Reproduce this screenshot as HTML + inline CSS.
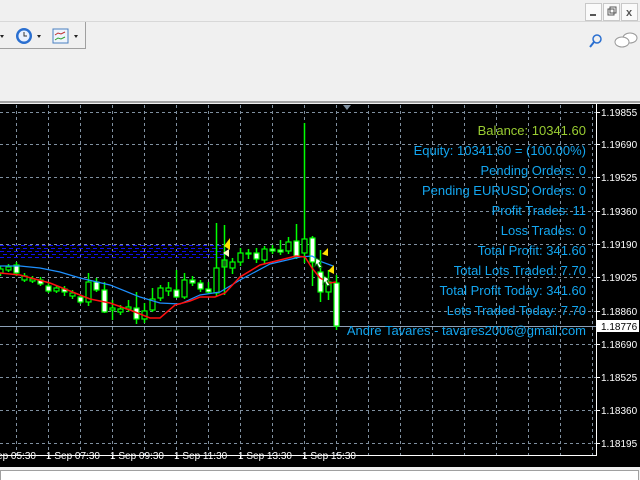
<!DOCTYPE html>
<html><head><meta charset="utf-8"><style>
html,body{margin:0;padding:0;width:640px;height:480px;overflow:hidden;background:#f0f0f0;font-family:"Liberation Sans",sans-serif}
svg{position:absolute;left:0;top:0}
</style></head><body>
<svg width="640" height="480" xmlns="http://www.w3.org/2000/svg" font-family="Liberation Sans, sans-serif">
<rect width="640" height="480" fill="#f0f0f0"/>
<line x1="0" y1="21.5" x2="640" y2="21.5" stroke="#d8d8d8"/>
<g stroke="#c8c8c8" fill="#fafafa">
<rect x="585.5" y="3.5" width="16" height="17"/><rect x="603.5" y="3.5" width="16" height="17"/><rect x="621.5" y="3.5" width="16" height="17"/></g>
<rect x="590" y="14" width="6" height="2" fill="#555"/>
<rect x="608" y="9" width="6" height="6" fill="none" stroke="#555"/><rect x="610" y="7" width="6" height="6" fill="none" stroke="#555"/>
<text x="629" y="16" font-size="11" font-weight="bold" fill="#555" text-anchor="middle">x</text>
<path d="M0 48.5H85.5V22" fill="none" stroke="#a0a0a0"/>
<path d="M0 35l4 0-2 3z" fill="#222"/>
<circle cx="24" cy="36" r="8" fill="#2a6fd0"/><circle cx="24" cy="36" r="5.5" fill="#e8f0ff"/><path d="M24 32v4h3" stroke="#333" fill="none"/>
<path d="M37 35h4l-2 3z" fill="#222"/>
<rect x="53" y="29" width="15" height="14" fill="#eef4fc" stroke="#4a7fc0"/>
<path d="M55 35l3-2 3 1 4-2" stroke="#c03030" fill="none"/><path d="M55 40l3-2 3 1 4-2" stroke="#30a030" fill="none"/>
<path d="M74 35h4l-2 3z" fill="#222"/>
<circle cx="597" cy="39" r="4" fill="none" stroke="#2a6fd0" stroke-width="1.5"/><path d="M594 42l-4 5" stroke="#2a6fd0" stroke-width="2"/>
<ellipse cx="630" cy="38" rx="7" ry="5" fill="#fff" stroke="#999"/><ellipse cx="622" cy="42" rx="7" ry="5" fill="#fff" stroke="#999"/>
<line x1="0" y1="102" x2="640" y2="102" stroke="#a0a0a0" stroke-width="2"/>
<rect x="0" y="104" width="640" height="363" fill="#000"/>
<g stroke="#8090a0" stroke-dasharray="3,3" stroke-width="1">
<path d="M16.5 105V455M48.5 105V455M80.5 105V455M112.5 105V455M144.5 105V455M176.5 105V455M208.5 105V455M240.5 105V455M272.5 105V455M304.5 105V455M336.5 105V455M368.5 105V455M400.5 105V455M432.5 105V455M464.5 105V455M496.5 105V455M528.5 105V455M560.5 105V455M592.5 105V455"/>
<path d="M0 112.5H596M0 144.5H596M0 177.5H596M0 211.5H596M0 244.5H596M0 277.5H596M0 311.5H596M0 344.5H596M0 377.5H596M0 410.5H596M0 443.5H596"/>
</g>
<path d="M343 105h8l-4 5z" fill="#8090a0"/>
<line x1="0" y1="326.5" x2="596" y2="326.5" stroke="#8ca0b8"/>
<path d="M596.5 104V455.5H0" fill="none" stroke="#fff"/>
<g stroke="#fff"><path d="M596 112.5h4M596 144.5h4M596 177.5h4M596 211.5h4M596 244.5h4M596 277.5h4M596 311.5h4M596 344.5h4M596 377.5h4M596 410.5h4M596 443.5h4"/>
<path d="M48.5 455v4M112.5 455v4M176.5 455v4M240.5 455v4M304.5 455v4"/></g>
<g fill="#fff" font-size="10">
<text x="601" y="116">1.19855</text><text x="601" y="148">1.19690</text><text x="601" y="181">1.19525</text><text x="601" y="215">1.19360</text><text x="601" y="248">1.19190</text><text x="601" y="281">1.19025</text><text x="601" y="315">1.18860</text><text x="601" y="348">1.18690</text><text x="601" y="381">1.18525</text><text x="601" y="414">1.18360</text><text x="601" y="447">1.18195</text>
<text x="-18" y="459">1 Sep 05:30</text><text x="46" y="459">1 Sep 07:30</text><text x="110" y="459">1 Sep 09:30</text><text x="174" y="459">1 Sep 11:30</text><text x="238" y="459">1 Sep 13:30</text><text x="302" y="459">1 Sep 15:30</text>
</g>
<rect x="597" y="320" width="42" height="12" fill="#fff"/>
<text x="601" y="330" font-size="10" fill="#000">1.18776</text>
<g stroke="#1010f0" stroke-dasharray="4,3" stroke-width="1">
<path d="M0 245.5H224M2 248.5H224M0 251.5H224M3 254.5H224M0 257.5H224"/></g>
<g stroke="#00ff00" stroke-width="1.5">
<path d="M0.5 266v10M8.5 264v8M16.5 262v14M24.5 273v9M32.5 276v7M40.5 277v9M48.5 283v10M56.5 285v8M64.5 286v10M72.5 290v9M80.5 295v9M88.5 273v33M96.5 278v14M104.5 282v31M112.5 300v20M120.5 305v10M128.5 300v12M136.5 292v32M144.5 303v20M152.5 288v24M160.5 285v16M168.5 282v14M176.5 270v28M184.5 273v26M192.5 276v10M200.5 280v12M208.5 282v12M216.5 223v74M224.5 225v70M232.5 258v16M240.5 248v18M248.5 249v10M256.5 248v15M264.5 246v18M272.5 245v9M280.5 240v15M288.5 237v17M296.5 224v35M304.5 123v140M312.5 236v50M320.5 250v52M328.5 270v30M336.5 275v55"/>
</g>
<g stroke="#00ff00" stroke-width="1.2">
<rect x="-2" y="269" width="5" height="4" fill="#000"/>
<rect x="6" y="267" width="5" height="3" fill="#000"/>
<rect x="14" y="265" width="5" height="8" fill="#fff"/>
<rect x="22" y="276" width="5" height="4" fill="#000"/>
<rect x="30" y="279" width="5" height="2" fill="#000"/>
<rect x="38" y="280" width="5" height="4" fill="#fff"/>
<rect x="46" y="286" width="5" height="5" fill="#fff"/>
<rect x="54" y="288" width="5" height="3" fill="#000"/>
<rect x="62" y="289" width="5" height="3" fill="#fff"/>
<rect x="70" y="293" width="5" height="3" fill="#000"/>
<rect x="78" y="297" width="5" height="5" fill="#fff"/>
<rect x="86" y="282" width="5" height="20" fill="#000"/>
<rect x="94" y="282" width="5" height="8" fill="#fff"/>
<rect x="102" y="290" width="5" height="22" fill="#fff"/>
<rect x="110" y="308" width="5" height="2" fill="#000"/>
<rect x="118" y="309" width="5" height="3" fill="#000"/>
<rect x="126" y="307" width="5" height="2" fill="#000"/>
<rect x="134" y="308" width="5" height="11" fill="#fff"/>
<rect x="142" y="311" width="5" height="8" fill="#000"/>
<rect x="150" y="299" width="5" height="11" fill="#000"/>
<rect x="158" y="288" width="5" height="10" fill="#000"/>
<rect x="166" y="288" width="5" height="3" fill="#000"/>
<rect x="174" y="290" width="5" height="7" fill="#fff"/>
<rect x="182" y="280" width="5" height="17" fill="#000"/>
<rect x="190" y="280" width="5" height="3" fill="#fff"/>
<rect x="198" y="283" width="5" height="6" fill="#fff"/>
<rect x="206" y="289" width="5" height="3" fill="#fff"/>
<rect x="214" y="268" width="5" height="25" fill="#000"/>
<rect x="222" y="260" width="5" height="7" fill="#1a6a1a"/>
<rect x="230" y="262" width="5" height="6" fill="#000"/>
<rect x="238" y="253" width="5" height="9" fill="#000"/>
<rect x="246" y="253" width="5" height="1" fill="#000"/>
<rect x="254" y="253" width="5" height="6" fill="#fff"/>
<rect x="262" y="249" width="5" height="11" fill="#000"/>
<rect x="270" y="249" width="5" height="2" fill="#fff"/>
<rect x="278" y="250" width="5" height="2" fill="#fff"/>
<rect x="286" y="242" width="5" height="9" fill="#000"/>
<rect x="294" y="241" width="5" height="16" fill="#fff"/>
<rect x="302" y="239" width="5" height="14" fill="#000"/>
<rect x="310" y="238" width="5" height="24" fill="#fff"/>
<rect x="318" y="272" width="5" height="20" fill="#fff"/>
<rect x="326" y="282" width="5" height="10" fill="#000"/>
<rect x="334" y="283" width="5" height="43" fill="#fff"/>
</g>
<polyline fill="none" stroke="#1e90ff" stroke-width="1.2" points="0,266 20,266 40,268 60,272 80,278 110,285 140,297 160,303 180,304 200,295 220,292 240,280 270,264 300,257 312,256 322,262 333,266"/>
<polyline fill="none" stroke="#ff1010" stroke-width="1.5" points="0,273 20,275 50,283 75,293 90,299 110,303 130,310 150,318 160,318 175,305 190,301 200,297 215,297 225,293 240,277 260,265 280,260 296,256 305,257 312,268 320,278 330,283 336,282"/>
<g fill="#ffe000"><path d="M230 238l-6 8 6 4z"/><path d="M229 249v8l-6-4z" fill="#fff8c0"/><path d="M328 248l-6 6 6 2z"/><path d="M334 265l-6 6 6 3z"/></g>
<path d="M316 258l5 3-2 2 3 4-3 1-2-4-2 2z" fill="#fff" stroke="#080"/>
<path d="M324 276l5 3-2 2 3 4-3 1-2-4-2 2z" fill="#fff" stroke="#080"/>
<g font-size="13" text-anchor="end" fill="#13a6f0">
<text x="586" y="135" fill="#9acd32">Balance: 10341.60</text>
<text x="586" y="155">Equity: 10341.60 = (100.00%)</text>
<text x="586" y="175">Pending Orders: 0</text>
<text x="586" y="195">Pending EURUSD Orders: 0</text>
<text x="586" y="215">Profit Trades: 11</text>
<text x="586" y="235">Loss Trades: 0</text>
<text x="586" y="255">Total Profit: 341.60</text>
<text x="586" y="275">Total Lots Traded: 7.70</text>
<text x="586" y="295">Total Profit Today: 341.60</text>
<text x="586" y="315">Lots Traded Today: 7.70</text>
<text x="586" y="335">Andre Tavares - tavares2006@gmail.com</text>
</g>
<rect x="0" y="467" width="640" height="13" fill="#f0f0f0"/>
<rect x="0.5" y="470.5" width="638" height="12" fill="#fff" stroke="#a0a0a0"/>
</svg>
</body></html>
